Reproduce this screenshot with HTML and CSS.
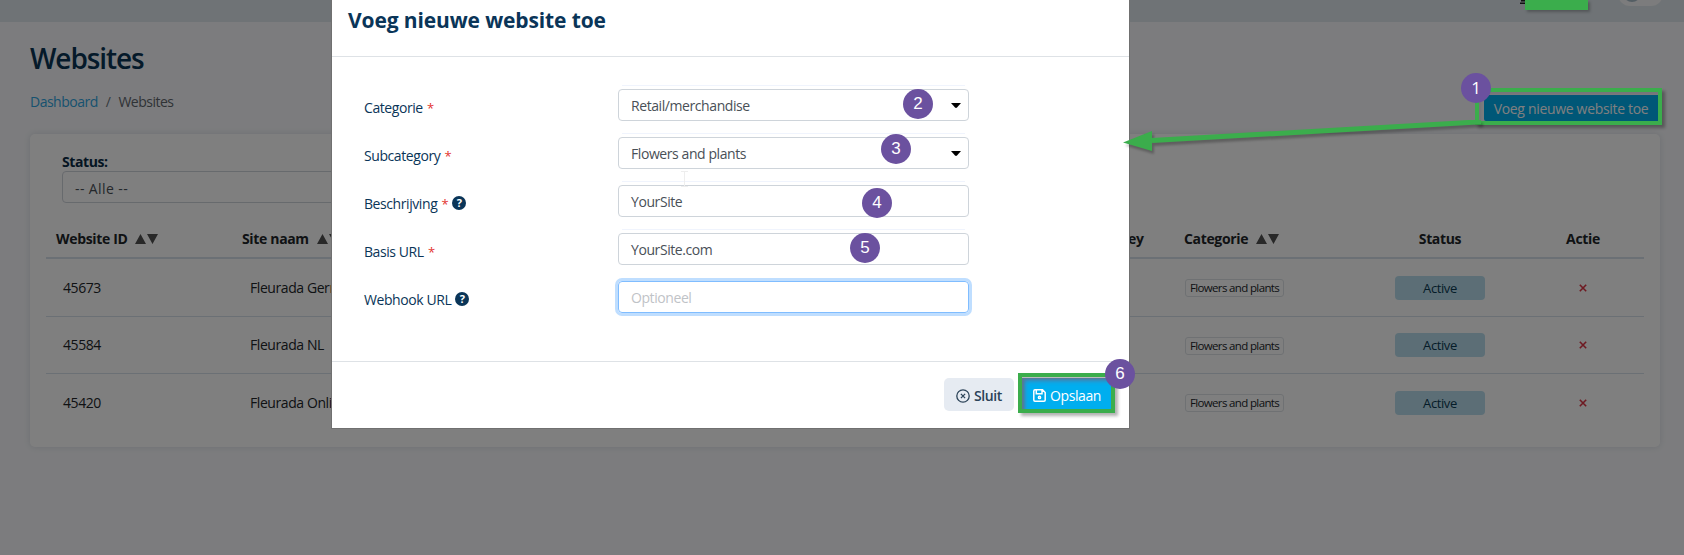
FILE: index.html
```html
<!DOCTYPE html>
<html lang="nl">
<head>
<meta charset="utf-8">
<title>Websites</title>
<link rel="stylesheet" href="styles.css">
</head>
<body>
<div class="page">
  <header class="topbar"><svg class="user" viewBox="0 0 6 5"><path d="M1 .7H6M0 3.300H5"/></svg><span class="toggle"><i class="knob"></i></span></header>
  <main class="content">
    <h1 class="page-title">Websites</h1>
    <div class="subhead">
      <nav class="crumbs"><a class="crumb-link">Dashboard</a><span class="sep">/</span><span class="crumb-here">Websites</span></nav>
      <button class="add-btn">Voeg nieuwe website toe</button>
    </div>
    <section class="card">
      <label class="filter-label">Status:</label>
      <div class="filter">-- Alle --</div>
      <div class="table">
        <div class="row head">
          <span>Website ID<svg class="sort" viewBox="0 0 23 10"><path d="M0 10 5.500 0 11 10zM12 0H23L17.500 10z"/></svg></span>
          <span class="name">Site naam<svg class="sort" viewBox="0 0 23 10"><path d="M0 10 5.500 0 11 10zM12 0H23L17.500 10z"/></svg></span>
          <span class="key">Key</span>
          <span>Categorie<svg class="sort" viewBox="0 0 23 10"><path d="M0 10 5.500 0 11 10zM12 0H23L17.500 10z"/></svg></span>
          <span class="mid">Status</span><span class="mid">Actie</span>
        </div>
        <div class="row"><span class="td">45673</span><span class="td">Fleurada Germany</span><span></span><span><b class="tag">Flowers and plants</b></span><span class="mid"><b class="state">Active</b></span><span class="mid"><svg class="del" viewBox="0 0 8 8"><path d="M.8 .8 7.200 7.200M7.200 .8 .8 7.200"/></svg></span></div>
        <div class="row"><span class="td">45584</span><span class="td">Fleurada NL</span><span></span><span><b class="tag">Flowers and plants</b></span><span class="mid"><b class="state">Active</b></span><span class="mid"><svg class="del" viewBox="0 0 8 8"><path d="M.8 .8 7.200 7.200M7.200 .8 .8 7.200"/></svg></span></div>
        <div class="row last"><span class="td">45420</span><span class="td">Fleurada Online</span><span></span><span><b class="tag">Flowers and plants</b></span><span class="mid"><b class="state">Active</b></span><span class="mid"><svg class="del" viewBox="0 0 8 8"><path d="M.8 .8 7.200 7.200M7.200 .8 .8 7.200"/></svg></span></div>
      </div>
    </section>
  </main>
</div>
<div class="backdrop"></div>
<div class="modal">
  <div class="modal-head"><h2 class="modal-title">Voeg nieuwe website toe</h2></div>
  <div class="modal-body">
    <div class="field"><label>Categorie <em>*</em></label><div class="input lined">Retail/merchandise<svg class="caret" viewBox="0 0 10 5"><path d="M0 0H10L6 4.500Q5 5.300 4 4.500z"/></svg></div></div>
    <div class="field"><label>Subcategory <em>*</em></label><div class="input lined">Flowers and plants<svg class="caret" viewBox="0 0 10 5"><path d="M0 0H10L6 4.500Q5 5.300 4 4.500z"/></svg></div></div>
    <div class="field"><label>Beschrijving <em>*</em><i class="help">?</i></label><div class="input lined">YourSite</div></div>
    <div class="field"><label>Basis URL <em>*</em></label><div class="input lined">YourSite.com</div></div>
    <div class="field"><label>Webhook URL<i class="help">?</i></label><div class="input focus">Optioneel</div></div>
  </div>
  <div class="modal-foot">
    <button class="btn close"><svg class="ic-close" viewBox="0 0 14 14"><circle cx="7" cy="7" r="6.200"/><path d="M4.900 4.900 9.100 9.100M9.100 4.900 4.900 9.100"/></svg>Sluit</button>
    <button class="btn save"><svg class="ic-save" viewBox="0 0 13 13"><path d="M2 .8H9.500L12.200 3.500V11Q12.200 12.200 11 12.200H2Q.8 12.200 .8 11V2Q.8 .8 2 .8zM3.300 1V4.700H9V1"/><circle cx="6.500" cy="8.400" r="1.100"/></svg>Opslaan</button>
  </div>
</div>
<div class="frame frame-add"></div>
<div class="frame frame-save"></div>
<div class="mask"></div>
<svg class="ibeam" viewBox="0 0 7 16"><path d="M0 .5H7M3.500 .5V15.500M0 15.500H7"/></svg>
<svg class="arrow" viewBox="0 0 362 40"><path d="M29 20.500 358 1.800" stroke="#3bad4c" stroke-width="5"/><path d="M0 22.500 29 11V31z" fill="#3bad4c"/></svg>
<div class="num n1">1</div><div class="num n2">2</div><div class="num n3">3</div><div class="num n4">4</div><div class="num n5">5</div><div class="num n6">6</div>
</body>
</html>
```
FILE: styles.css
```css
* { box-sizing: border-box; }
body { margin: 0; width: 1684px; height: 555px; overflow: hidden; position: relative; font: 14px/20px "Open Sans", "Noto Sans", sans-serif; letter-spacing: -.42px; color: #212529; }
button { font: inherit; letter-spacing: inherit; border: 0; }
.page { height: 555px; background: #f8f9fc; }
.topbar { height: 22px; background: #dfe7ec; display: flex; justify-content: flex-end; padding-right: 21px; overflow: hidden; }
.user { width: 6px; height: 5px; margin-right: 92px; fill: none; stroke: #222; stroke-width: 1.400; }
.toggle { width: 45px; height: 24px; margin-top: -18px; border-radius: 12px; background: #f8f9fa; }
.knob { display: block; width: 18px; height: 18px; margin: 2px 0 0 5px; border-radius: 9px; background: #a9bcc9; }
.content { padding: 20px 24px 0 30px; }
.page-title { margin: 0; font-size: 28px; line-height: 32px; font-weight: 600; letter-spacing: -1.1px; color: #0a3555; }
.subhead { display: flex; justify-content: space-between; height: 60px; }
.crumbs { display: flex; gap: 8px; padding-top: 18px; color: #5f666d; letter-spacing: -.5px; }
.crumb-link { color: #2fa4e0; }
.sep { color: #6c757d; }
.add-btn { width: 176px; height: 26px; margin-top: 21px; background: #00aeef; color: #fff; border-radius: 2px; padding: 1px 2px 0 0; letter-spacing: -.32px; }
.card { height: 313px; padding: 18px 16px 0; background: #fff; border-radius: 5px; box-shadow: 0 0 6px rgba(40,60,90,.14); }
.filter-label { display: block; margin-left: 16px; font-weight: 700; line-height: 19px; height: 20px; letter-spacing: -.42px; color: #0a2b45; }
.filter { width: 420px; height: 32px; margin: -1px 0 0 16px; padding: 7px 12px; border: 1px solid #ced4da; border-radius: 4px; color: #495057; line-height: 20px; letter-spacing: .4px; }
.row { display: grid; grid-template-columns: 187px 881px 60px 199px 134px 152px; align-items: center; height: 57px; border-bottom: 1px solid #d6e0ea; }
.head { height: 56px; border-bottom: 2px solid #d6e0ea; font-weight: 700; letter-spacing: -.34px; padding-top: 17px; color: #212529; }
.row > span { padding-left: 10px; white-space: nowrap; }
.row > .name { padding-left: 9px; }
.row > .td { padding-left: 17px; }
.row > .mid { display: flex; justify-content: center; align-items: center; padding: 0; }
.row > .key { padding-left: 5px; }
.row:nth-child(2) { height: 58px; }
.last { border: 0; }
.sort { width: 23px; height: 10px; margin-left: 8px; fill: #505050; }
.tag { display: block; width: 99px; height: 18px; margin: 1px 0 0 1px; border: 1px solid #dee2e6; border-radius: 3px; font: 11.500px/16px "Open Sans", sans-serif; letter-spacing: -.64px; text-align: center; }
.state { width: 90px; height: 24px; border-radius: 4px; background: #b8dcec; font: 13px/25px "Open Sans", sans-serif; letter-spacing: -.4px; text-align: center; color: #0a3a52; }
.del { width: 8px; height: 8px; fill: none; stroke: #dc3545; stroke-width: 1.600; }
.backdrop { position: absolute; inset: 0; background: rgba(0,0,0,.5); }
.modal { position: absolute; left: 331px; top: -20px; width: 799px; height: 449px; background: #fff; border: 1px solid #707070; display: flex; flex-direction: column; }
.modal-head { height: 76px; padding: 25px 16px; border-bottom: 1px solid #dee2e6; }
.modal-title { margin: 0; font-size: 21px; line-height: 28px; font-weight: 700; letter-spacing: -.12px; color: #0a3558; }
.modal-body { height: 304px; padding: 32px 0 0 32px; display: flex; flex-direction: column; gap: 16px; }
.field { display: flex; height: 32px; color: #0a3558; }
.field label { display: flex; width: 254px; padding-top: 9px; white-space: pre; line-height: 20px; }
.field em { font-style: normal; color: #e3342f; margin-left: 1px; font-size: 13px; }
.help { width: 14px; height: 14px; margin: 2px 0 0 4px; border-radius: 50%; background: #0a3558; color: #fff; font: 700 11px/14px "Open Sans", sans-serif; text-align: center; letter-spacing: 0; }
.input { position: relative; display: flex; justify-content: space-between; width: 351px; padding: 6px 7px 0 12px; border: 1px solid #ced4da; border-radius: 4px; color: #495057; }
.lined::before { content: ""; position: absolute; left: 3px; right: 3px; top: -5px; height: 1px; background: #f0f4fd; }
.focus { border-color: #80bdff; box-shadow: 0 0 0 3px #bfdeff; color: #bfc3c7; }
.caret { width: 10px; height: 5px; margin-top: 7px; fill: #000; }
.modal-foot { flex: 1; display: flex; border-top: 1px solid #dee2e6; padding: 16px 17px 0 612px; gap: 8px; }
.btn { display: flex; align-items: center; justify-content: center; height: 33px; padding: 2px 0 0; }
.close { width: 70px; gap: 4px; background: #e6ebf2; border-radius: 5px; color: #2b4358; font-weight: 600; }
.save { width: 90px; height: 33px; gap: 4px; background: #00aeef; color: #fff; box-shadow: inset 3px 3px 4px #4c7fab; }
.ic-close { width: 14px; height: 14px; fill: none; stroke: #2b4358; stroke-width: 1.300; }
.ic-save { width: 13px; height: 13px; fill: none; stroke: #fff; stroke-width: 1.500; }
.frame { position: absolute; border: 4px solid #3bad4c; box-shadow: 3px 3px 3px rgba(0,0,0,.3), inset 2px 2px 2px rgba(110,110,120,.5); }
.frame-add { left: 1475px; top: 88px; width: 187px; height: 37px; }
.frame-save { left: 1018px; top: 373px; width: 97px; height: 40px; }
.mask { position: absolute; left: 1525px; top: 0; width: 63px; height: 10px; background: #3bad4c; box-shadow: 2px 2px 3px rgba(0,0,0,.25); }
.ibeam { position: absolute; left: 681px; top: 171px; width: 7px; height: 16px; fill: none; stroke: #eee; }
.arrow { position: absolute; left: 1123px; top: 120px; width: 362px; height: 40px; filter: drop-shadow(2px 3px 1px rgba(0,0,0,.25)); }
.num { position: absolute; width: 30px; height: 30px; border-radius: 50%; background: #6b519f; color: #fff; font: 17px/30px "Liberation Sans", Arial, sans-serif; text-align: center; letter-spacing: 0; }
.n1 { left: 1461px; top: 73px; font-family: "Open Sans", sans-serif; line-height: 29px; }
.n2 { left: 903px; top: 89px; }
.n3 { left: 881px; top: 134px; }
.n4 { left: 862px; top: 188px; }
.n5 { left: 850px; top: 233px; }
.n6 { left: 1105px; top: 359px; }
```
